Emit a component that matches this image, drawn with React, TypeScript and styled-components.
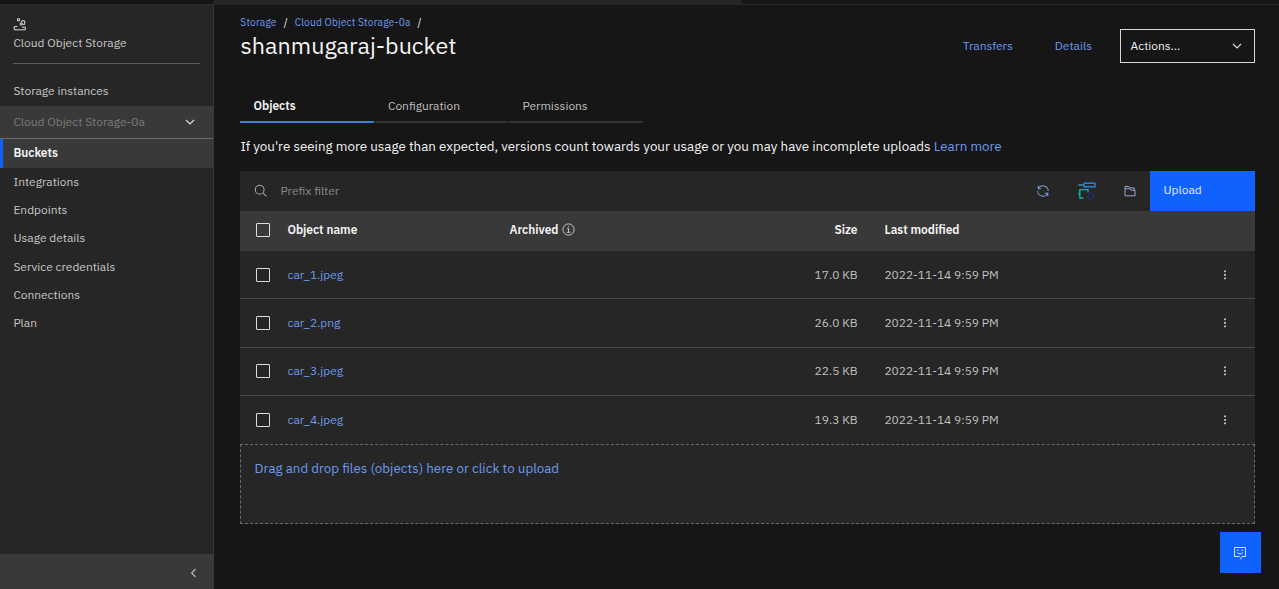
import React from "react";
import styled, { createGlobalStyle } from "styled-components";

const GlobalStyle = createGlobalStyle`
  *, *::before, *::after { box-sizing: border-box; }
  html, body { margin: 0; background: #161616; }
  body {
    overflow: hidden;
    color: #f4f4f4;
    font-family: "IBM Plex Sans", Roboto, "Liberation Sans", sans-serif;
    font-size: 11.95px;
    letter-spacing: 0;
  }
`;

const Link = styled.a`
  color: #6c9aef;
  text-decoration: none;
  white-space: pre;
`;

const Page = styled.div`
  display: flex;
  flex-direction: column;
  width: 100vw;
  height: 100vh;
`;

const TopStrip = styled.div`
  display: flex;
  flex: none;
  height: 5px;
  padding-left: 214px;
  border-bottom: 1px solid #2b2b2b;
`;

const StripTab = styled.div`
  width: 528px;
  height: 5px;
  background: #262626;
`;

const Body = styled.div`
  display: flex;
  flex: 1;
  min-height: 0;
`;

/* Side navigation */

const Sidebar = styled.nav`
  display: flex;
  flex-direction: column;
  flex: none;
  width: 214px;
  background: #262626;
  border-right: 1px solid #383838;
  color: #c6c6c6;
`;

const Product = styled.div`
  display: flex;
  flex-direction: column;
  height: 59px;
  margin: 0 13px;
  padding: 13px 0 0 0.4px;
  border-bottom: 1.5px solid #5c5c5c;
  line-height: 18px;

  svg { margin-bottom: 3px; }
`;

const InstancesLabel = styled.div`
  height: 42px;
  padding: 18px 13.4px 0;
  line-height: 18px;
`;

const InstanceRow = styled.div`
  display: flex;
  align-items: center;
  justify-content: space-between;
  height: 33px;
  padding: 0 17px 1px 13.4px;
  background: #393939;
  border-bottom: 1px solid #6a6a6a;
  color: #7c7c7c;
`;

const NavItem = styled.div<{ $active?: boolean }>`
  display: flex;
  align-items: center;
  height: ${(p) => (p.$active ? 29 : 28.25)}px;
  padding-bottom: ${(p) => (p.$active ? 3 : 1.5)}px;
  padding-left: ${(p) => (p.$active ? 10.4 : 13.4)}px;
  ${(p) =>
    p.$active &&
    `border-left: 3.5px solid #0f62fe; background: #393939; color: #f4f4f4; font-weight: 600;`}
`;

const Collapse = styled.div`
  display: flex;
  align-items: center;
  justify-content: flex-end;
  height: 35px;
  margin-top: auto;
  padding: 3px 13px 0 0;
  background: #393939;
`;

/* Main area */

const Main = styled.main`
  display: flex;
  flex-direction: column;
  flex: 1;
  padding: 0 24px 0 26px;
`;

const Header = styled.header`
  display: flex;
  justify-content: space-between;
  height: 85px;
`;

const Crumbs = styled.div`
  display: flex;
  gap: 7px;
  padding: 9px 0 0 0.3px;
  font-size: 10.2px;
  line-height: 17px;
  letter-spacing: 0.16px;
`;

const Title = styled.h1`
  margin: -3px 0 0;
  padding-left: 0.5px;
  font-size: 23.32px;
  font-weight: 400;
  line-height: 34px;
`;

const HeaderActions = styled.div`
  display: flex;
  align-items: center;
  height: 34px;
  margin-top: 24px;
`;

const HeaderLink = styled(Link)`
  margin-right: 42px;
  padding-bottom: 2px;
  & + & { margin-right: 28px; }
`;

const Select = styled.div`
  display: flex;
  align-items: center;
  justify-content: space-between;
  width: 135px;
  height: 34px;
  padding: 0 11px 1px 9.5px;
  border: 1px solid #d8d8d8;
`;

const Tabs = styled.div`
  display: flex;
  gap: 1px;
  height: 33px;
`;

const Tab = styled.div<{ $active?: boolean }>`
  display: flex;
  align-items: center;
  width: 133.5px;
  padding-left: 13.5px;
  border-bottom: 2px solid ${(p) => (p.$active ? "#3f7fd9" : "#343434")};
  color: ${(p) => (p.$active ? "#f4f4f4" : "#c0c0c0")};
  font-weight: ${(p) => (p.$active ? 600 : 400)};
`;

const Notice = styled.p`
  height: 48px;
  margin: 0;
  padding: 14px 0 0 0.4px;
  font-size: 13.37px;
  line-height: 18px;
  white-space: nowrap;
`;

const Toolbar = styled.div`
  display: flex;
  align-items: center;
  height: 40px;
  padding-left: 14px;
  background: #262626;
`;

const Filter = styled.div`
  display: flex;
  align-items: center;
  flex: 1;
  gap: 12.5px;
  color: #8a8a8a;

  span { padding-bottom: 1px; }
`;

const ToolIcons = styled.div`
  display: flex;
  align-items: center;
  gap: 28px;
  padding-right: 14px;
`;

const Upload = styled.button`
  width: 105px;
  height: 40px;
  padding: 0 0 3px 13.5px;
  border: 0;
  background: #0f62fe;
  color: #e4ecff;
  font: inherit;
  text-align: left;
`;

const Row = styled.div<{ $head?: boolean; $last?: boolean }>`
  display: grid;
  grid-template-columns: 47px 222px 259px 89px 27px 1fr 37px;
  align-items: center;
  height: ${(p) => (p.$head ? 40 : 48.25)}px;
  padding-bottom: ${(p) => (p.$head ? 2 : 0)}px;
  background: ${(p) => (p.$head ? "#393939" : "#262626")};
  border-bottom: ${(p) => (p.$head || p.$last ? "0" : "1px solid #484848")};
  color: ${(p) => (p.$head ? "#f4f4f4" : "#c0c0c0")};
  font-weight: ${(p) => (p.$head ? 600 : 400)};
`;

const Checkbox = styled.span`
  width: 14px;
  height: 14px;
  margin-left: 16px;
  border: 1px solid #dcdcdc;
  border-radius: 1px;
`;

const Cell = styled.div<{ $col: number; $end?: boolean }>`
  display: flex;
  align-items: center;
  justify-content: ${(p) => (p.$end ? "flex-end" : "flex-start")};
  gap: 4px;
  grid-column: ${(p) => p.$col};
  padding: 0 0 1px 0.4px;
  margin-right: ${(p) => (p.$end ? -0.5 : 0)}px;
  white-space: nowrap;
`;

const MenuDots = styled.svg`
  grid-column: 7;
`;

const DropZone = styled.div`
  flex: none;
  height: 80px;
  padding: 14px 13.6px;
  border: 1px dashed #6a6a6a;
  background: #262626;
  font-size: 13.35px;
  line-height: 18px;
`;

const ChatButton = styled.button`
  position: fixed;
  right: 18px;
  bottom: 16px;
  display: grid;
  place-items: center;
  width: 41px;
  height: 41px;
  padding: 0 1px 0 0;
  border: 0;
  background: #0f62fe;
`;

/* Icons */

const Chevron = ({ left }: { left?: boolean }) => (
  <svg width="12" height="12" viewBox="0 0 12 12" fill="none" stroke={left ? "#b8b8b8" : "#dedede"} strokeWidth="1.2">
    <path d={left ? "M7.5 2 3.7 6l3.8 4" : "M2 4l4 4 4-4"} />
  </svg>
);

const StorageIcon = () => (
  <svg width="14" height="13" viewBox="0 0 14 13" fill="none" stroke="#dadada" strokeWidth="1">
    <path d="M4.5 .8h2v2h-2zM7.3 5.1h1.9V7H7.3z" />
    <path d="M8.7 4.6V2.8h3v3.600h-1.700" />
    <path d="M4.500 8.600H1.2v3.200h11.200V9.200H9" />
  </svg>
);

const SearchIcon = () => (
  <svg width="14" height="14" viewBox="0 0 32 32" fill="#b9b9b9">
    <path d="m29 27.6-7.6-7.6A11 11 0 1 0 20 21.4l7.6 7.6zM4 13a9 9 0 1 1 9 9 9 9 0 0 1-9-9z" />
  </svg>
);

const RenewIcon = () => (
  <svg width="14" height="14" viewBox="0 0 32 32" fill="#83a5df">
    <path d="M12 10H6.78A11 11 0 0 1 27 16h2A13 13 0 0 0 6 7.68V4H4v8h8zM20 22h5.22A11 11 0 0 1 5 16H3a13 13 0 0 0 23 8.32V28h2v-8h-8z" />
  </svg>
);

const FlowIcon = () => (
  <svg width="18" height="19" viewBox="0 0 18 19" fill="none" strokeWidth="1.4">
    <path d="M.5 3H6" stroke="#2aa5b8" />
    <path d="M6 1.200h11v3.600H6z" stroke="#2a83dc" />
    <path d="M5 7.600H1.800V16H5.500" stroke="#12b09c" />
    <path d="M0 11.600h1.800" stroke="#12b09c" />
    <path d="M4.500 7.600H10v3" stroke="#25a0b4" />
    <path d="m13 11 3 2.200-1 3.300-2 1.300-2.400-1.300-.8-3.200z" stroke="#292d68" />
  </svg>
);

const FolderIcon = () => (
  <svg width="12" height="12" viewBox="0 0 12 12" fill="none" stroke="#91a8cf" strokeWidth="1">
    <path d="M1 3.800h5l1.200 1.400H11v5.600H1z" />
    <path d="M1 3.800V1.500h3.800L6 2.900h4.200v2.300" />
  </svg>
);

const InfoIcon = () => (
  <svg width="13" height="13" viewBox="0 0 13 13" fill="none" stroke="#c6c6c6" strokeWidth="1">
    <circle cx="6.5" cy="6.5" r="5.6" />
    <path d="M5.2 5.6h1.4v3.7M4.9 9.3h3.3M6.4 3.2v1.1" />
  </svg>
);

const ChatIcon = () => (
  <svg width="14" height="14" viewBox="0 0 14 14" fill="none" stroke="#d6e3ff" strokeWidth="1">
    <path d="M6.500 10.500h-5v-9h11v9H9L7.200 13.400" />
    <path d="M4.200 6.500c.7 1.900 4.900 1.900 5.600 0" />
    <path d="M4.300 4.300h1.200M8.500 4.300h1.200" strokeWidth="1.300" />
  </svg>
);

const navItems = [
  "Integrations",
  "Endpoints",
  "Usage details",
  "Service credentials",
  "Connections",
  "Plan",
];

const objects = [
  { name: "car_1.jpeg", size: "17.0 KB" },
  { name: "car_2.png", size: "26.0 KB" },
  { name: "car_3.jpeg", size: "22.5 KB" },
  { name: "car_4.jpeg", size: "19.3 KB" },
];

export default function App() {
  return (
    <Page>
      <GlobalStyle />
      <TopStrip>
        <StripTab />
      </TopStrip>
      <Body>
        <Sidebar>
          <Product>
            <StorageIcon />
            Cloud Object Storage
          </Product>
          <InstancesLabel>Storage instances</InstancesLabel>
          <InstanceRow>
            Cloud Object Storage-0a
            <Chevron />
          </InstanceRow>
          <NavItem $active>Buckets</NavItem>
          {navItems.map((label) => (
            <NavItem key={label}>{label}</NavItem>
          ))}
          <Collapse>
            <Chevron left />
          </Collapse>
        </Sidebar>

        <Main>
          <Header>
            <div>
              <Crumbs>
                <Link>Storage</Link>
                <span>/</span>
                <Link>Cloud Object Storage-0a</Link>
                <span>/</span>
              </Crumbs>
              <Title>shanmugaraj-bucket</Title>
            </div>
            <HeaderActions>
              <HeaderLink>Transfers</HeaderLink>
              <HeaderLink>Details</HeaderLink>
              <Select>
                Actions...
                <Chevron />
              </Select>
            </HeaderActions>
          </Header>

          <Tabs>
            <Tab $active>Objects</Tab>
            <Tab>Configuration</Tab>
            <Tab>Permissions</Tab>
          </Tabs>

          <Notice>
            If you're seeing more usage than expected, versions count towards your usage or you may have incomplete
            uploads <Link>Learn more</Link>
          </Notice>

          <Toolbar>
            <Filter>
              <SearchIcon />
              <span>Prefix filter</span>
            </Filter>
            <ToolIcons>
              <RenewIcon />
              <FlowIcon />
              <FolderIcon />
            </ToolIcons>
            <Upload>Upload</Upload>
          </Toolbar>

          <Row $head>
            <Checkbox />
            <Cell $col={2}>Object name</Cell>
            <Cell $col={3}>
              Archived
              <InfoIcon />
            </Cell>
            <Cell $col={4} $end>Size</Cell>
            <Cell $col={6}>Last modified</Cell>
          </Row>
          {objects.map(({ name, size }, i) => (
            <Row key={name} $last={i === objects.length - 1}>
              <Checkbox />
              <Cell $col={2}>
                <Link>{name}</Link>
              </Cell>
              <Cell $col={4} $end>{size}</Cell>
              <Cell $col={6}>2022-11-14 9:59 PM</Cell>
              <MenuDots width="14" height="12" viewBox="0 0 14 12" fill="#dedede">
                <rect x="6.200" y="1.500" width="1.700" height="1.700" />
                <rect x="6.200" y="5" width="1.700" height="1.700" />
                <rect x="6.200" y="8.500" width="1.700" height="1.700" />
              </MenuDots>
            </Row>
          ))}
          <DropZone>
            <Link>Drag and drop files (objects) here or click to upload</Link>
          </DropZone>
        </Main>
      </Body>
      <ChatButton aria-label="Chat">
        <ChatIcon />
      </ChatButton>
    </Page>
  );
}
